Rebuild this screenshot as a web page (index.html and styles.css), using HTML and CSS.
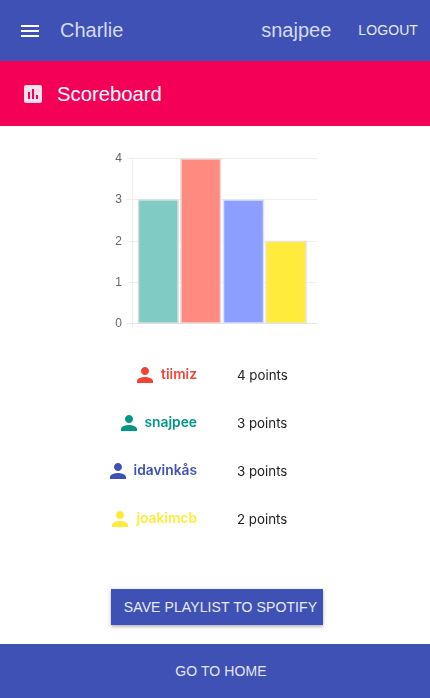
FILE: index.html
```html
<!DOCTYPE html>
<html lang="en">
<head>
<meta charset="utf-8">
<title>Scoreboard</title>
<link rel="stylesheet" href="styles.css">
</head>
<body>
<div class="page">
  <header class="appbar">
    <svg class="menu-icon" width="24" height="24" viewBox="0 0 24 24"><path d="M3 18h18v-2H3v2zm0-5h18v-2H3v2zm0-7v2h18V6H3z"/></svg>
    <span class="brand">Charlie</span>
    <span class="user">snajpee</span>
    <span class="logout">LOGOUT</span>
  </header>
  <section class="banner">
    <svg class="banner-icon" width="24" height="24" viewBox="0 0 24 24"><path d="M19 3H5c-1.100 0-2 .9-2 2v14c0 1.100.9 2 2 2h14c1.100 0 2-.9 2-2V5c0-1.100-.9-2-2-2zM9 17H7v-7h2v7zm4 0h-2V7h2v10zm4 0h-2v-4h2v4z"/></svg>
    <span class="banner-title">Scoreboard</span>
  </section>
  <main class="content">
    <svg class="chart" width="230" height="190" viewBox="100 145 230 190">
      <g class="grid">
        <path d="M132.500 157v171M127 158.500h190M127 199.500h190M127 241.500h190M127 282.500h190"/>
        <path class="axis" d="M127 323.500h190"/>
      </g>
      <g class="ticks">
        <text x="122" y="162">4</text>
        <text x="122" y="203">3</text>
        <text x="122" y="245">2</text>
        <text x="122" y="286">1</text>
        <text x="122" y="327">0</text>
      </g>
      <rect class="bar bar-teal" x="138.500" y="200" width="39.500" height="123"/>
      <rect class="bar bar-red" x="181" y="159" width="39.500" height="164"/>
      <rect class="bar bar-blue" x="223.500" y="200" width="40" height="123"/>
      <rect class="bar bar-yellow" x="266" y="241.500" width="40" height="81.500"/>
    </svg>
    <div class="scores">
      <div class="name red"><svg viewBox="0 0 24 24"><path d="M12 12c2.210 0 4-1.790 4-4s-1.790-4-4-4-4 1.790-4 4 1.790 4 4 4zm0 2c-2.670 0-8 1.340-8 4v2h16v-2c0-2.660-5.330-4-8-4z"/></svg><b>tiimiz</b></div>
      <div class="pts">4 points</div>
      <div class="name teal"><svg viewBox="0 0 24 24"><path d="M12 12c2.210 0 4-1.790 4-4s-1.790-4-4-4-4 1.790-4 4 1.790 4 4 4zm0 2c-2.670 0-8 1.340-8 4v2h16v-2c0-2.660-5.330-4-8-4z"/></svg><b>snajpee</b></div>
      <div class="pts">3 points</div>
      <div class="name indigo"><svg viewBox="0 0 24 24"><path d="M12 12c2.210 0 4-1.790 4-4s-1.790-4-4-4-4 1.790-4 4 1.790 4 4 4zm0 2c-2.670 0-8 1.340-8 4v2h16v-2c0-2.660-5.330-4-8-4z"/></svg><b>idavinkås</b></div>
      <div class="pts">3 points</div>
      <div class="name yellow"><svg viewBox="0 0 24 24"><path d="M12 12c2.210 0 4-1.790 4-4s-1.790-4-4-4-4 1.790-4 4 1.790 4 4 4zm0 2c-2.670 0-8 1.340-8 4v2h16v-2c0-2.660-5.330-4-8-4z"/></svg><b>joakimcb</b></div>
      <div class="pts">2 points</div>
    </div>
    <div class="save-wrap"><button class="save">SAVE PLAYLIST TO SPOTIFY</button></div>
  </main>
  <footer class="home">GO TO HOME</footer>
</div>
</body>
</html>
```
FILE: styles.css
```css
* { box-sizing: border-box; }
html, body { margin: 0; padding: 0; }
body { background: #fff; font-family: "Liberation Sans", Arial, sans-serif; }
.page { width: 430px; height: 698px; display: flex; flex-direction: column; overflow: hidden; }
.appbar { height: 61px; background: #3f51b5; display: flex; align-items: center; padding: 0 13px 0 18px; color: #d5daf2; }
.menu-icon { fill: #fff; flex: none; }
.brand { margin-left: 18px; font-size: 20px; }
.user { margin-left: auto; font-size: 20px; }
.logout { margin-left: 26px; font-size: 14px; letter-spacing: 0.1px; color: #e6e9f8; position: relative; left: 1px; top: -1px; }
.banner { height: 65px; background: #f50057; display: flex; align-items: center; padding-left: 21px; color: #fff; }
.banner-icon { fill: #ffdfe9; flex: none; }
.banner-title { margin-left: 12px; font-size: 20.3px; position: relative; top: 1px; }
.content { flex: 1; display: flex; flex-direction: column; align-items: center; padding-top: 19px; }
.chart { display: block; flex: none; will-change: transform; }
.grid path { fill: none; stroke: #eeeeee; stroke-width: 1; }
.grid .axis { stroke: #e4e4e4; }
.ticks text { font-family: "Liberation Sans", Arial, sans-serif; font-size: 12px; fill: #666; text-anchor: end; }
.bar { stroke-width: 1.500; }
.bar-teal { fill: #80cbc4; stroke: #d5dedc; }
.bar-red { fill: #ff8a80; stroke: #ead9d6; }
.bar-blue { fill: #8c9eff; stroke: #dde1f5; }
.bar-yellow { fill: #ffeb3b; stroke: #e8e6d0; }
.scores { width: 430px; margin-top: 16px; display: grid; grid-template-columns: 197px 1fr; grid-auto-rows: 48px; column-gap: 40px; align-items: center; font-family: Inter, sans-serif; font-size: 13.3px; will-change: transform; }
.name { display: flex; justify-content: flex-end; align-items: center; gap: 4px; }
.name svg { fill: currentColor; flex: none; width: 24px; height: 24px; }
.name b { font-weight: 600; font-size: 13.8px; position: relative; top: -1px; }
.pts { color: #212121; }
.red { color: #f44336; }
.teal { color: #009688; }
.indigo { color: #3f51b5; }
.yellow { color: #ffeb3b; }
.save-wrap { width: 430px; padding: 46px 0 0 111px; }
.save { display: block; width: 212px; height: 36px; padding: 0 0 0 7px; border: 0; border-radius: 0; background: #3f51b5; color: #e8ebf9; font: 14px "Liberation Sans", Arial, sans-serif; letter-spacing: 0.1px; box-shadow: 0 1px 5px rgba(0,0,0,.2), 0 2px 2px rgba(0,0,0,.14); }
.home { height: 54px; flex: none; background: #3f51b5; color: #e3e6f7; display: flex; align-items: center; justify-content: center; padding-left: 12px; font-size: 14px; letter-spacing: 0.1px; }
```
